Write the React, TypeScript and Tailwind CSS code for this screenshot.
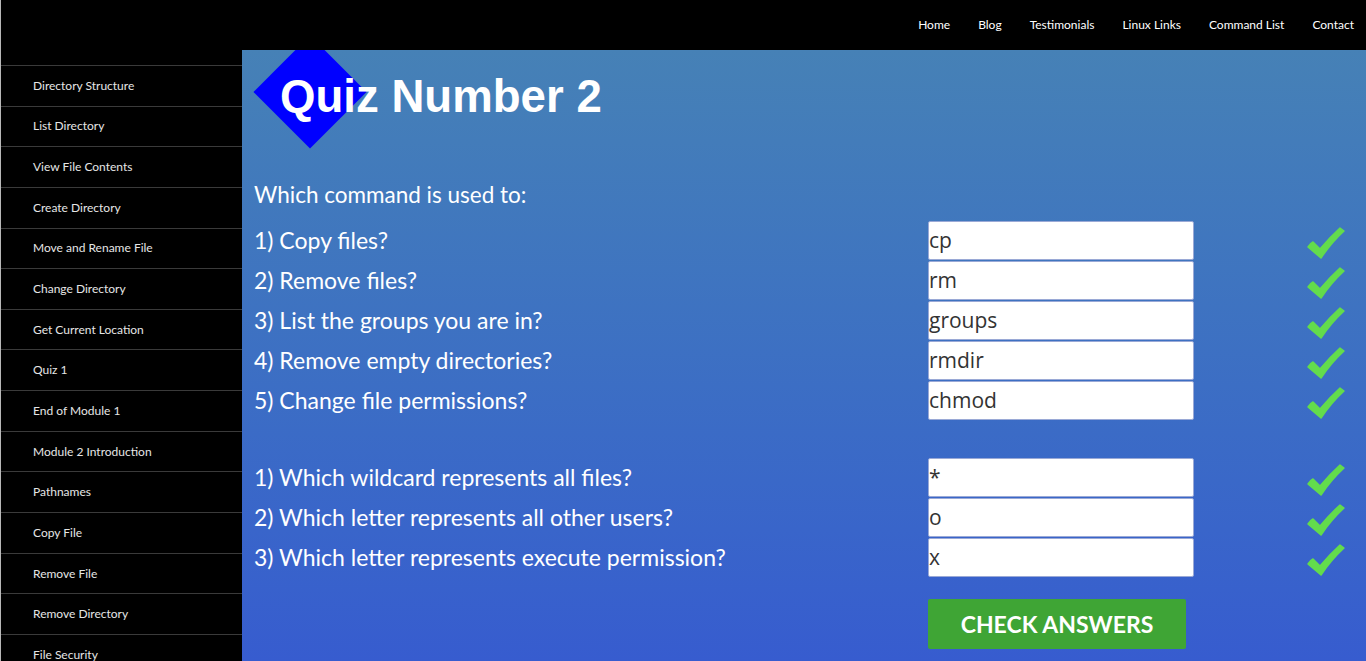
import React from "react";

const sideItems = [
  "Directory Structure",
  "List Directory",
  "View File Contents",
  "Create Directory",
  "Move and Rename File",
  "Change Directory",
  "Get Current Location",
  "Quiz 1",
  "End of Module 1",
  "Module 2 Introduction",
  "Pathnames",
  "Copy File",
  "Remove File",
  "Remove Directory",
  "File Security",
  "File Permissions",
];

const navItems = ["Home", "Blog", "Testimonials", "Linux Links", "Command List", "Contact"];

const group1: [string, string][] = [
  ["1) Copy files?", "cp"],
  ["2) Remove files?", "rm"],
  ["3) List the groups you are in?", "groups"],
  ["4) Remove empty directories?", "rmdir"],
  ["5) Change file permissions?", "chmod"],
];

const group2: [string, string][] = [
  ["1) Which wildcard represents all files?", "*"],
  ["2) Which letter represents all other users?", "o"],
  ["3) Which letter represents execute permission?", "x"],
];

function Check() {
  return (
    <svg width="40" height="34" viewBox="0 0 40 34" className="block">
      <path
        d="M2 21 Q5 17 7 16 L14 23 Q24 11 34 2 L38 5 Q25 17 15 32 Z"
        fill="#63dc4c"
        stroke="#63dc4c"
        strokeWidth="1.5"
        strokeLinejoin="round"
      />
    </svg>
  );
}

function Row({ q, a }: { q: string; a: string }) {
  return (
    <div className="flex h-[40px] items-start">
      <div className="flex h-[39px] w-[674px] items-center text-[23px] text-white">{q}</div>
      <div
        className="flex h-[39px] w-[266px] items-center rounded-[2px] border border-[#9aa9d6] bg-white pt-[1px] text-[21px] text-[#333]"
        style={{ fontFamily: '"Open Sans", sans-serif' }}
      >
        {a}
      </div>
      <div className="ml-[112px] mt-[5px]">
        <Check />
      </div>
    </div>
  );
}

export default function App() {
  return (
    <div
      className="h-[661px] w-[1366px] overflow-hidden border-l border-[#b8b8b8] bg-black"
      style={{ fontFamily: "Lato, sans-serif" }}
    >
      <header className="flex h-[50px] items-center justify-end gap-[28px] bg-black pr-[12px] text-[12px] text-white">
        {navItems.map((n) => (
          <span key={n}>{n}</span>
        ))}
      </header>
      <div className="flex h-[611px]">
        <aside className="w-[241px] shrink-0 bg-black pt-[15px]">
          {sideItems.map((s) => (
            <div
              key={s}
              className="flex h-[40.65px] items-center border-t border-[#3a3a3a] pl-[32px] text-[12px] text-[#e6e6e6]"
            >
              {s}
            </div>
          ))}
        </aside>
        <main className="relative flex-1 overflow-hidden bg-gradient-to-b from-[#4681b6] to-[#375ccf] pl-[12px]">
          <div className="absolute left-[28px] top-[2px] h-[80px] w-[80px] rotate-45 bg-[#0000ff]" />
          <div className="relative pt-[24px]">
            <h1
              className="ml-[26px] h-[45px] text-[45.6px] font-bold leading-none text-white"
              style={{ fontFamily: '"Liberation Sans", Arial, sans-serif' }}
            >
              Quiz Number 2
            </h1>
            <div className="mt-[56px] flex h-[40px] items-center text-[22.5px] text-white">
              Which command is used to:
            </div>
            <div className="mt-[6px]">
              {group1.map(([q, a]) => (
                <Row key={q} q={q} a={a} />
              ))}
            </div>
            <div className="mt-[37px]">
              {group2.map(([q, a]) => (
                <Row key={q} q={q} a={a} />
              ))}
            </div>
            <button className="ml-[674px] mt-[21px] flex h-[50px] w-[258px] items-center justify-center rounded-[2px] bg-[#3fa535] text-[23px] font-bold text-white">
              CHECK ANSWERS
            </button>
          </div>
        </main>
      </div>
    </div>
  );
}
